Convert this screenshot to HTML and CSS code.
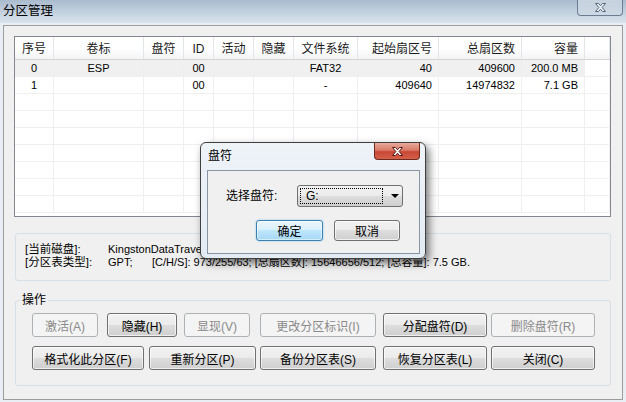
FILE: index.html
```html
<!DOCTYPE html>
<html lang="zh-CN">
<head>
    <meta charset="UTF-8">
    <title>分区管理</title>
    <link rel="stylesheet" href="styles.css">
</head>
<body>
    <div class="window">
        <!-- Title bar -->
        <div class="titlebar">
            <span class="title">分区管理</span>
            <span class="title-close">
                <svg width="13" height="11" viewBox="0 0 13 11"><path d="M1.5 1.5h3l2 2.3 2-2.3h3l-3.4 4 3.4 4h-3l-2-2.3-2 2.3h-3l3.4-4z" fill="#eef1f5" stroke="#56667a" stroke-width="1"/></svg>
            </span>
        </div>

        <div class="frame">
            <!-- Partition list -->
            <div class="listview">
                <div class="lv-header">
                    <div class="c">序号</div>
                    <div class="c">卷标</div>
                    <div class="c">盘符</div>
                    <div class="c">ID</div>
                    <div class="c">活动</div>
                    <div class="c">隐藏</div>
                    <div class="c">文件系统</div>
                    <div class="r">起始扇区号</div>
                    <div class="r">总扇区数</div>
                    <div class="r">容量</div>
                    <div></div>
                </div>
                <div class="lv-row selected">
                    <div class="c">0</div>
                    <div class="c">ESP</div>
                    <div class="c"></div>
                    <div class="c">00</div>
                    <div class="c"></div>
                    <div class="c"></div>
                    <div class="c">FAT32</div>
                    <div class="r">40</div>
                    <div class="r">409600</div>
                    <div class="r">200.0 MB</div>
                    <div></div>
                </div>
                <div class="lv-row">
                    <div class="c">1</div>
                    <div class="c"></div>
                    <div class="c"></div>
                    <div class="c">00</div>
                    <div class="c"></div>
                    <div class="c"></div>
                    <div class="c">-</div>
                    <div class="r">409640</div>
                    <div class="r">14974832</div>
                    <div class="r">7.1 GB</div>
                    <div></div>
                </div>
                <div class="lv-row"><div></div><div></div><div></div><div></div><div></div><div></div><div></div><div></div><div></div><div></div><div></div></div>
                <div class="lv-row"><div></div><div></div><div></div><div></div><div></div><div></div><div></div><div></div><div></div><div></div><div></div></div>
                <div class="lv-row"><div></div><div></div><div></div><div></div><div></div><div></div><div></div><div></div><div></div><div></div><div></div></div>
                <div class="lv-row"><div></div><div></div><div></div><div></div><div></div><div></div><div></div><div></div><div></div><div></div><div></div></div>
                <div class="lv-row"><div></div><div></div><div></div><div></div><div></div><div></div><div></div><div></div><div></div><div></div><div></div></div>
                <div class="lv-row"><div></div><div></div><div></div><div></div><div></div><div></div><div></div><div></div><div></div><div></div><div></div></div>
                <div class="lv-row"><div></div><div></div><div></div><div></div><div></div><div></div><div></div><div></div><div></div><div></div><div></div></div>
            </div>

            <!-- Disk info -->
            <div class="info-box">
                <div class="info-line">
                    <span class="info-key">[当前磁盘]:</span><span class="info-val">KingstonDataTraveler 2.0</span>
                </div>
                <div class="info-line">
                    <span class="info-key">[分区表类型]:</span><span class="info-val info-short">GPT;</span><span class="info-val">[C/H/S]: 973/255/63; [总扇区数]: 15646656/512; [总容量]: 7.5 GB.</span>
                </div>
            </div>

            <!-- Actions -->
            <fieldset class="ops">
                <legend>操作</legend>
                <div class="btn-row">
                    <button class="btn btn-activate" disabled>激活(A)</button>
                    <button class="btn btn-hide">隐藏(H)</button>
                    <button class="btn btn-show" disabled>显现(V)</button>
                    <button class="btn btn-id" disabled>更改分区标识(I)</button>
                    <button class="btn btn-assign">分配盘符(D)</button>
                    <button class="btn btn-remove" disabled>删除盘符(R)</button>
                </div>
                <div class="btn-row">
                    <button class="btn btn-format">格式化此分区(F)</button>
                    <button class="btn btn-repart">重新分区(P)</button>
                    <button class="btn btn-backup">备份分区表(S)</button>
                    <button class="btn btn-restore">恢复分区表(L)</button>
                    <button class="btn btn-close">关闭(C)</button>
                </div>
            </fieldset>
        </div>

        <!-- Drive letter dialog -->
        <div class="dialog">
            <div class="dlg-titlebar">
                <span class="dlg-title">盘符</span>
                <span class="dlg-close">
                    <svg width="13" height="11" viewBox="0 0 13 11"><path d="M1.5 1.5h3l2 2.3 2-2.3h3l-3.4 4 3.4 4h-3l-2-2.3-2 2.3h-3l3.4-4z" fill="#fff" stroke="#5b1a10" stroke-width="1"/></svg>
                </span>
            </div>
            <div class="dlg-client">
                <div class="dlg-field">
                    <span class="dlg-label">选择盘符:</span>
                    <div class="combo">
                        <span class="combo-value">G:</span>
                        <svg class="combo-arrow" width="8" height="4" viewBox="0 0 8 4"><path d="M0 0h8L4 4z" fill="#000"/></svg>
                    </div>
                </div>
                <div class="dlg-buttons">
                    <button class="btn btn-default">确定</button>
                    <button class="btn btn-cancel">取消</button>
                </div>
            </div>
        </div>
    </div>
</body>
</html>
```

FILE: styles.css
```css
/* Reset */
* {
    margin: 0;
    padding: 0;
    box-sizing: border-box;
    font-family: "Liberation Sans", "Noto Sans CJK SC", sans-serif;
}

body {
    width: 626px;
    height: 402px;
    overflow: hidden;
    font-size: 12px;
    color: #000;
}

/* Main window */
.window {
    position: relative;
    width: 626px;
    height: 402px;
    display: flex;
    flex-direction: column;
    background-color: #e9eef4;
}

.titlebar {
    height: 23px;
    display: flex;
    justify-content: space-between;
    align-items: flex-start;
    background: linear-gradient(#aabbcf, #c2d0de 50%, #d9e3ed);
}

.title {
    padding-left: 3px;
    line-height: 23px;
    font-size: 12.5px;
}

.title-close {
    width: 46px;
    height: 16px;
    margin-right: 3px;
    display: flex;
    align-items: center;
    justify-content: center;
    border: 1px solid #6d7d91;
    border-top: none;
    border-radius: 0 0 4px 4px;
    background: linear-gradient(rgba(255, 255, 255, 0.35), rgba(255, 255, 255, 0.08));
}

.frame {
    flex: 1;
    margin: 2px 3px;
    padding: 10px 0 0 10px;
    border: 1px solid #9c9c9c;
    background-color: #f0f0f0;
}

/* List view */
.listview {
    width: 597px;
    height: 181px;
    overflow: hidden;
    border: 1px solid #828790;
    background-color: #fff;
}

.lv-header,
.lv-row {
    display: grid;
    grid-template-columns: 39px 90px 40px 30px 40px 40px 64px 81px 83px 63px 1fr;
}

.lv-header {
    height: 23px;
    border-bottom: 1px solid #d5d5d5;
    background: linear-gradient(#fff, #fff 50%, #f3f4f6);
}

.lv-header div {
    padding-top: 3px;
    line-height: 19px;
    border-right: 1px solid #e2e5e9;
    color: #1a1a1a;
}

.lv-row {
    height: 17px;
}

.lv-row div {
    padding-top: 1px;
    line-height: 15px;
    font-size: 11px;
    border-right: 1px solid #efefef;
    border-bottom: 1px solid #efefef;
}

.lv-row.selected div {
    background-color: #f0f0f0;
}

.lv-row.selected div:last-child {
    background-color: #fff;
}

.c {
    text-align: center;
}

.r {
    text-align: right;
    padding-right: 6px;
}

/* Info box */
.info-box {
    width: 596px;
    height: 48px;
    margin: 16px 0 0 1px;
    padding: 9px 0 0 9px;
    border: 1px solid #d5dfe5;
    border-radius: 3px;
}

.info-line {
    height: 13px;
    line-height: 13px;
    font-size: 11.5px;
    white-space: nowrap;
}

.info-key {
    display: inline-block;
    width: 83px;
}

.info-val {
    font-size: 11px;
}

.info-short {
    display: inline-block;
    width: 44px;
}

/* Actions group */
.ops {
    width: 596px;
    margin: 12px 0 0 1px;
    padding: 6px 0 15px 0;
    border: 1px solid #d5dfe5;
    border-radius: 3px;
}

.ops legend {
    margin-left: 4px;
    padding: 0 2px;
    line-height: 14px;
}

.btn-row {
    display: flex;
    padding-left: 16px;
}

.btn-row + .btn-row {
    margin-top: 9px;
}

.btn {
    height: 24px;
    font-size: 12px;
    color: #000;
    border: 1px solid #707070;
    border-radius: 3px;
    background: linear-gradient(#f2f2f2, #ebebeb 49%, #dddddd 50%, #cfcfcf);
    box-shadow: inset 0 0 0 1px rgba(255, 255, 255, 0.65);
}

.btn:disabled {
    color: #8a8a8a;
    border-color: #adb2b5;
    background: #f4f4f4;
    box-shadow: none;
}

.btn-activate { width: 66px; }
.btn-hide { width: 70px; margin-left: 9px; }
.btn-show { width: 66px; margin-left: 7px; }
.btn-id { width: 116px; margin-left: 10px; }
.btn-assign { width: 104px; margin-left: 7px; }
.btn-remove { width: 104px; margin-left: 4px; }

.btn-format { width: 112px; }
.btn-repart { width: 107px; margin-left: 5px; }
.btn-backup { width: 116px; margin-left: 4px; }
.btn-restore { width: 104px; margin-left: 7px; }
.btn-close { width: 104px; margin-left: 4px; }

/* Dialog */
.dialog {
    position: absolute;
    left: 200px;
    top: 142px;
    width: 226px;
    height: 117px;
    display: flex;
    flex-direction: column;
    border: 1px solid #3f3f3f;
    border-radius: 6px;
    background: linear-gradient(#eef3f8, #e3ebf3);
    box-shadow: 3px 4px 9px rgba(0, 0, 0, 0.55);
}

.dlg-titlebar {
    height: 27px;
    display: flex;
    justify-content: space-between;
    align-items: flex-start;
}

.dlg-title {
    padding-left: 7px;
    line-height: 27px;
}

.dlg-close {
    width: 46px;
    height: 17px;
    margin-right: 5px;
    display: flex;
    align-items: center;
    justify-content: center;
    border: 1px solid #6e2a1e;
    border-top: none;
    border-radius: 0 0 4px 4px;
    background: linear-gradient(#e9aa9b, #d87a68 45%, #c74733 55%, #d5604a);
}

.dlg-client {
    flex: 1;
    margin: 0 5px 4px 6px;
    padding: 14px 0 0 18px;
    border: 1px solid #8995a2;
    background-color: #f0f0f0;
}

.dlg-field {
    display: flex;
    align-items: center;
}

.dlg-label {
    width: 71px;
    line-height: 22px;
}

.combo {
    width: 106px;
    height: 22px;
    display: flex;
    align-items: center;
    border: 1px solid #707070;
    border-radius: 3px;
    background: linear-gradient(#f2f2f2, #ebebeb 49%, #dddddd 50%, #cfcfcf);
}

.combo-value {
    width: 83px;
    height: 16px;
    margin-left: 2px;
    padding-left: 5px;
    line-height: 14px;
    border: 1px dotted #000;
}

.combo-arrow {
    margin-left: 8px;
}

.dlg-buttons {
    display: flex;
    margin-top: 13px;
    padding-left: 30px;
}

.dlg-buttons .btn {
    height: 21px;
}

.btn-default {
    width: 67px;
    border-color: #3c7fb1;
    background: linear-gradient(#eaf6fd, #d9f0fc 49%, #bee6fd 50%, #a7d9f5);
    box-shadow: inset 0 0 0 1px rgba(255, 255, 255, 0.5), 0 0 2px #7fc4ec;
}

.btn-cancel {
    width: 66px;
    margin-left: 11px;
}
```
